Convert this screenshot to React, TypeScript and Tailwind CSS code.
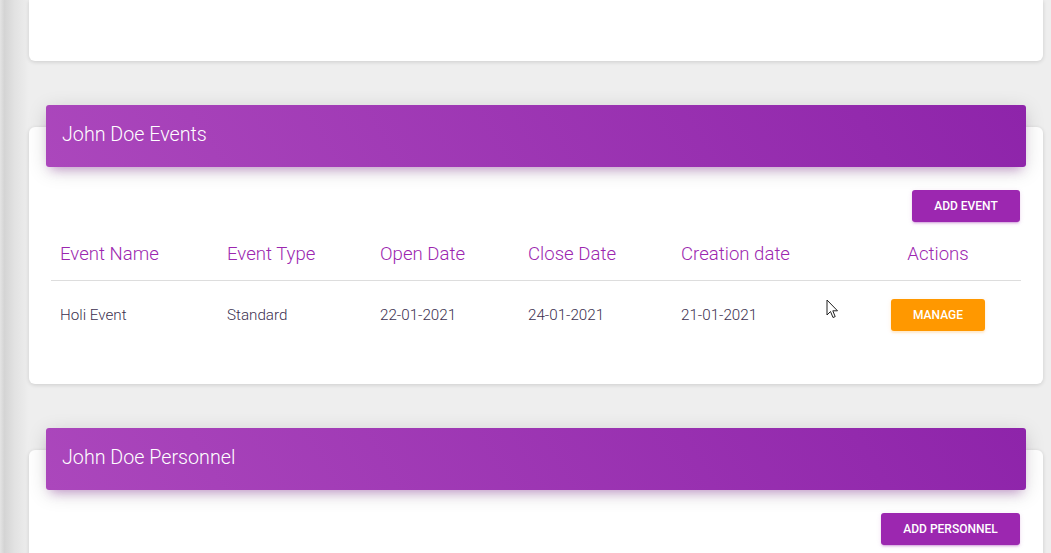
import React from 'react';

const FONT = { fontFamily: 'Roboto, "Liberation Sans", sans-serif' };

// 표 칼럼 폭 (좌측 51px 기준)
const COLS = 'grid grid-cols-[167px_153px_148px_153px_183px_166px]';

const events = [
  { name: 'Holi Event', type: 'Standard', open: '22-01-2021', close: '24-01-2021', created: '21-01-2021' },
];

const CardHeader: React.FC<{ title: string }> = ({ title }) => (
  <div className="mx-[17px] -mt-[22px] h-[62px] rounded-[3px] flex items-center pl-[16px] bg-[linear-gradient(60deg,#ab47bc,#8e24aa)] shadow-[0_4px_20px_0_rgba(0,0,0,0.14),0_7px_10px_-5px_rgba(156,39,176,0.4)]">
    <h4 className="text-white text-[19.7px] font-light leading-none pb-[2px]">{title}</h4>
  </div>
);

const PurpleButton: React.FC<{ label: string; width: string }> = ({ label, width }) => (
  <button className={`${width} h-[32px] rounded-[3px] bg-[#9c27b0] text-white text-[12px] font-medium uppercase shadow-[0_2px_2px_0_rgba(156,39,176,0.14),0_3px_1px_-2px_rgba(156,39,176,0.2),0_1px_5px_0_rgba(156,39,176,0.12)]`}>
    {label}
  </button>
);

const Cursor = () => (
  <svg width="13" height="20" viewBox="0 0 13 20" className="absolute left-[797px] top-[172px] pointer-events-none">
    <path d="M1 1 L1 16 L4.5 12.5 L7 18.5 L9.2 17.6 L6.8 11.8 L11.5 11.8 Z" fill="#fff" stroke="#222" strokeWidth="1" strokeLinejoin="round" />
  </svg>
);

export default function App() {
  return (
    <div className="flex w-[1051px] h-[553px] overflow-hidden bg-[#eeeeee]" style={FONT}>
      {/* 사이드바 그림자 */}
      <div className="w-[29px] shrink-0 bg-[linear-gradient(90deg,#e4e4e4_0%,#d4d4d4_15%,#e2e2e2_50%,#eeeeee_100%)]" />

      <div className="w-[1014px] shrink-0 flex flex-col">
        {/* 위쪽 카드 (일부만 보임) */}
        <div className="h-[61px] shrink-0 bg-white rounded-b-[6px] shadow-[0_1px_4px_0_rgba(0,0,0,0.14)]" />

        {/* 이벤트 카드 */}
        <div className="relative mt-[66px] shrink-0 bg-white rounded-[6px] shadow-[0_1px_4px_0_rgba(0,0,0,0.14)] pb-[35px]">
          <CardHeader title="John Doe Events" />
          <div className="px-[22px]">
            <div className="flex justify-end mt-[23px] pr-[1px]">
              <PurpleButton label="Add Event" width="w-[108px]" />
            </div>
            <div className={`${COLS} h-[59px] items-end pb-[11px] border-b border-[#dddddd] text-[18.6px] font-light text-[#9c27b0]`}>
              <div className="pl-[9px]">Event Name</div>
              <div className="pl-[9px]">Event Type</div>
              <div className="pl-[9px]">Open Date</div>
              <div className="pl-[9px]">Close Date</div>
              <div className="pl-[9px]">Creation date</div>
              <div className="text-center">Actions</div>
            </div>
            {events.map((e) => (
              <div key={e.name} className={`${COLS} h-[68px] items-center text-[15.2px] font-light text-[#3c3050]`}>
                <div className="pl-[9px]">{e.name}</div>
                <div className="pl-[9px]">{e.type}</div>
                <div className="pl-[9px]">{e.open}</div>
                <div className="pl-[9px]">{e.close}</div>
                <div className="pl-[9px]">{e.created}</div>
                <div className="flex justify-center">
                  <button className="w-[94px] h-[32px] rounded-[3px] bg-[#ff9800] text-white text-[12px] font-medium uppercase shadow-[0_2px_2px_0_rgba(255,152,0,0.14),0_1px_5px_0_rgba(255,152,0,0.12)]">
                    Manage
                  </button>
                </div>
              </div>
            ))}
          </div>
          <Cursor />
        </div>

        {/* 인원 카드 */}
        <div className="mt-[66px] shrink-0 bg-white rounded-[6px] shadow-[0_1px_4px_0_rgba(0,0,0,0.14)] pb-[40px]">
          <CardHeader title="John Doe Personnel" />
          <div className="px-[22px]">
            <div className="flex justify-end mt-[23px] pr-[1px]">
              <PurpleButton label="Add Personnel" width="w-[139px]" />
            </div>
          </div>
        </div>
      </div>
    </div>
  );
}
